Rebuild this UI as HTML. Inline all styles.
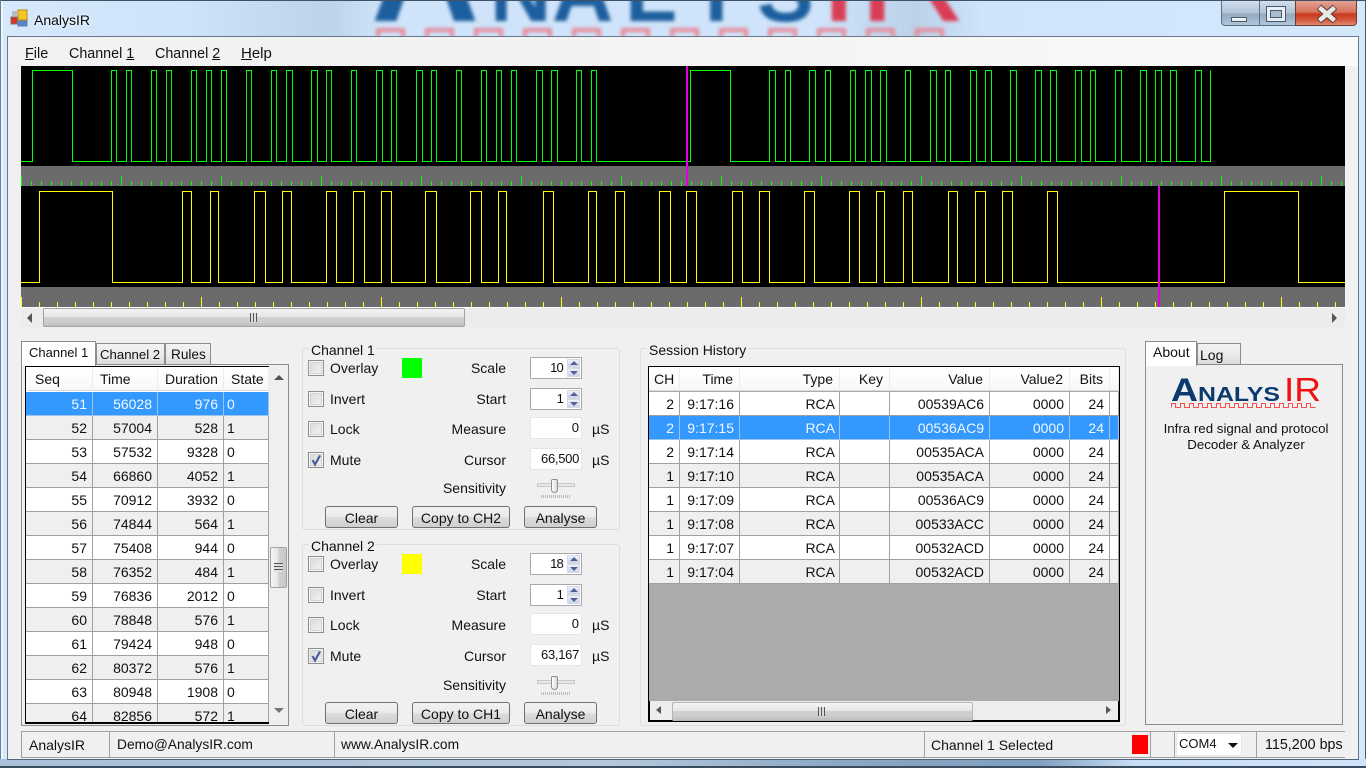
<!DOCTYPE html>
<html><head><meta charset="utf-8"><title>AnalysIR</title>
<style>
html,body{margin:0;padding:0;width:1366px;height:768px;overflow:hidden;background:#cfe4fa}
body{font:14px/16px "Liberation Sans",sans-serif;color:#111;position:relative}
div,span.a,svg.a{position:absolute}
svg{display:block}
.t{position:absolute;white-space:nowrap;line-height:16px;height:16px}
.r{position:absolute;white-space:nowrap;line-height:16px;height:16px;text-align:right}
.cb{position:absolute;width:14px;height:14px;left:308px;border:1px solid #8e8f8f;background:linear-gradient(135deg,#d8d8d8,#f4f4f4);box-shadow:inset 0 0 0 1px #f4f4f4,inset 0 0 0 2px #d4d4d4}
.btn{position:absolute;height:20px;border:1px solid #707070;border-radius:3px;overflow:hidden;text-align:center;line-height:22px;background:linear-gradient(#f2f2f2,#ebebeb 48%,#dddddd 52%,#cfcfcf);box-sizing:content-box}
.inp{position:absolute;left:530px;width:50px;height:20px;background:#fff;border:1px solid #e3e6e8;border-radius:1px;font-size:13px}
.spin{position:absolute;left:530px;width:50px;height:20px;background:#fff;border:1px solid #a9a9a9;font-size:13px;letter-spacing:-.8px}
.up,.dn{position:absolute;left:36px;width:13px;height:9px;background:linear-gradient(#f3f5fa,#c8d0e6);border:0;box-shadow:inset 0 0 0 1px #d6dae6}
.up{top:1px}.dn{top:10px}
.up:after,.dn:after{content:"";position:absolute;left:3px;border-left:4px solid transparent;border-right:4px solid transparent}
.up:after{top:2px;border-bottom:4px solid #4f6197}
.dn:after{top:3px;border-top:4px solid #4f6197}
.gb{position:absolute;border:1px solid #d5dfe5;border-radius:3px;box-sizing:border-box}
.lg{position:absolute;background:#f0f0f0;padding:0 2px;white-space:nowrap;line-height:16px}
table{border-collapse:separate;border-spacing:0;table-layout:fixed;font-size:14px;position:absolute;left:0;top:25px}
td{height:23px;padding:0;border-right:1px solid #a0a0a0;border-bottom:1px solid #a0a0a0;text-align:right;line-height:22px;white-space:nowrap;overflow:hidden}
td span{padding-right:5px}
td.l{text-align:left;padding-left:3px}
tr.g td{background:#efefef}
tr.w td{background:#fff}
tr.s td{background:#3399ff;color:#f2f7ff;border-color:#9cc4ea}
.hd{position:absolute;top:0;height:24px;background:linear-gradient(#fff,#f7f8f9);border-right:1px solid #e9edf2;border-bottom:1px solid #d8dade;box-sizing:border-box;line-height:24px;white-space:nowrap}
.tri{position:absolute;width:0;height:0}
.tabi{position:absolute;border:1px solid #898c95;border-bottom:0;background:linear-gradient(#f2f2f2,#ebebeb 50%,#d9d9d9);box-sizing:border-box;white-space:nowrap}
.tabs{position:absolute;border:1px solid #898c95;border-bottom:0;background:#fff;box-sizing:border-box;line-height:21px;padding-left:7px;white-space:nowrap;z-index:3}
.sb{position:absolute;top:732px;height:25px;line-height:26px;white-space:nowrap}
.vl{position:absolute;top:732px;width:1px;height:25px;background:#a0a0a0}
.tk{position:absolute}
</style></head>
<body>
<!-- glass -->
<div style="left:0;top:0;width:1366px;height:768px;background:linear-gradient(90deg,#d6e8fb 0,#cde3fa 14%,#bcd3ea 24%,#cfe4fa 28%,#cfe4fa 60%,#bbd2e9 67%,#cfe4fb 72%,#d4e8fc 100%)"></div>
<svg class="a" style="left:0;top:0" width="1366" height="40">
<defs><filter id="bl" x="-5%" y="-20%" width="110%" height="140%"><feGaussianBlur stdDeviation="1.8"/></filter><clipPath id="cp"><rect width="1366" height="37"/></clipPath></defs>
<g clip-path="url(#cp)"><g filter="url(#bl)" font-family="Liberation Sans">
<text y="21" x="371" font-weight="bold" font-size="150" fill="#1f5f9e">A</text>
<text y="21" x="490 552 625 688 757" font-weight="bold" font-size="85" fill="#1f5f9e">NALYS</text>
<text y="21" x="818 858" font-size="150" fill="#d93c55">IR</text>
<path d="M378 38V30H403V38M427 38V30H452V38M476 38V30H501V38M525 38V30H550V38M574 38V30H599V38M623 38V30H648V38M672 38V30H697V38M721 38V30H746V38M770 38V30H795V38M819 38V30H844V38M868 38V30H893V38M917 38V30H942V38" fill="none" stroke="#e88a9a" stroke-width="4"/>
</g></g></svg>
<div style="left:0;top:0;width:1366px;height:1px;background:#3f5266"></div>
<!-- left/right edge -->
<div style="left:0;top:0;width:1px;height:768px;background:#6a7f94"></div>
<div style="left:1365px;top:0;width:1px;height:768px;background:#4a5b6c"></div>
<div style="left:1px;top:1px;width:2px;height:767px;background:#eef6fe"></div>
<!-- bottom glass -->
<div style="left:0;top:759px;width:1366px;height:9px;background:linear-gradient(90deg,#a9c0d8,#b4c8dc 45%,#8aa7c4 62%,#7f9fbe 76%,#c8def5 83%,#cfe3f9)"></div>
<div style="left:0;top:766px;width:1366px;height:2px;background:#3b4c5e"></div>
<!-- icon & title -->
<svg class="a" style="left:10px;top:9px" width="18" height="18">
<rect x="8" y="1" width="9" height="10" fill="#f6c52a" stroke="#b58a1a"/>
<rect x="1" y="8" width="6" height="7" fill="#d8322a" stroke="#7d6a60"/>
<rect x="8" y="12" width="9" height="5" fill="#4f86d8" stroke="#6a7f9c"/>
<rect x="2" y="2" width="5" height="5" fill="#b9bdc2"/>
</svg>
<div class="t" style="left:34px;top:12px;color:#0c0c0c;text-shadow:0 0 4px #fff">AnalysIR</div>
<!-- caption buttons -->
<div style="left:1221px;top:1px;width:38px;height:25px;box-sizing:border-box;border:1px solid #5e6f82;border-top:0;border-right:0;border-radius:0 0 0 4px;background:linear-gradient(#d1dfee,#aec2d6 50%,#93a9bf 55%,#b2c6da)"></div>
<div style="left:1259px;top:1px;width:36px;height:25px;box-sizing:border-box;border:1px solid #5e6f82;border-top:0;border-right:0;background:linear-gradient(#d1dfee,#aec2d6 50%,#93a9bf 55%,#b2c6da)"></div>
<div style="left:1295px;top:1px;width:62px;height:25px;box-sizing:border-box;border:1px solid #6d3a30;border-top:0;border-radius:0 0 4px 0;background:linear-gradient(#e4a194,#d8755f 45%,#c93a1e 55%,#d65a3e 80%,#e28a76)"></div>
<div style="left:1231px;top:17px;width:16px;height:5px;box-sizing:border-box;border:1px solid #4b5a6b;background:linear-gradient(#fff,#dfe5ec)"></div>
<div style="left:1266px;top:6px;width:20px;height:16px;box-sizing:border-box;border:1px solid #4b5a6b;background:#e8eef4"></div>
<div style="left:1270px;top:10px;width:12px;height:8px;box-sizing:border-box;border:1px solid #4b5a6b;background:#a9bccf"></div>
<svg class="a" style="left:1315px;top:4px" width="24" height="20"><path d="M4 3L20 17M20 3L4 17" stroke="#5a3a34" stroke-width="6.5" fill="none"/><path d="M4.5 3.5L19.5 16.5M19.5 3.5L4.5 16.5" stroke="#e8e8e8" stroke-width="4.5" fill="none"/></svg>
<!-- client -->
<div style="left:7px;top:36px;width:1352px;height:1px;background:#69788a"></div>
<div style="left:7px;top:36px;width:1px;height:724px;background:#69788a"></div>
<div style="left:1358px;top:36px;width:1px;height:724px;background:#69788a"></div>
<div style="left:7px;top:759px;width:1352px;height:1px;background:#52677d"></div>
<div style="left:8px;top:37px;width:1350px;height:722px;background:#f0f0f0"></div>
<div style="left:8px;top:37px;width:1350px;height:29px;background:linear-gradient(90deg,#f1f1f1,#f3f3f3 50%,#fafafa)"></div>
<div class="t" style="left:25px;top:46px;font-size:14.4px"><u>F</u>ile</div>
<div class="t" style="left:69px;top:46px;font-size:14.3px">Channel <u>1</u></div>
<div class="t" style="left:155px;top:46px;font-size:14.3px">Channel <u>2</u></div>
<div class="t" style="left:241px;top:46px;font-size:15px"><u>H</u>elp</div>
<!-- waveforms -->
<div style="left:21px;top:66px;width:1324px;height:241px;background:#000"></div>
<div style="left:21px;top:166px;width:1324px;height:20px;background:#6b6b6b"></div>
<div style="left:21px;top:287px;width:1324px;height:20px;background:#6b6b6b"></div>
<div class="tk" style="left:21px;top:181px;width:1324px;height:5px;background:repeating-linear-gradient(90deg,#0f0 0,#0f0 1px,transparent 1px,transparent 10px)"></div>
<div class="tk" style="left:21px;top:176px;width:1324px;height:5px;background:repeating-linear-gradient(90deg,#0f0 0,#0f0 1px,transparent 1px,transparent 100px)"></div>
<div class="tk" style="left:21px;top:302px;width:1324px;height:5px;background:repeating-linear-gradient(90deg,#ff0 0,#ff0 1px,transparent 1px,transparent 18px)"></div>
<div class="tk" style="left:21px;top:297px;width:1324px;height:5px;background:repeating-linear-gradient(90deg,#ff0 0,#ff0 1px,transparent 1px,transparent 180px)"></div>
<svg class="a" style="left:0;top:0" width="1366" height="330">
<path fill="none" stroke="#0f0" stroke-width="1" d="M21 161.5H32.5V70.5H72.5V161.5H111.5V70.5H116.5V161.5H126.5V70.5H131.5V161.5H151.5V70.5H156.5V161.5H166.5V70.5H171.5V161.5H191.5V70.5H196.5V161.5H206.5V70.5H211.5V161.5H221.5V70.5H226.5V161.5H246.5V70.5H251.5V161.5H271.5V70.5H276.5V161.5H286.5V70.5H292.5V161.5H311.5V70.5H317.5V161.5H326.5V70.5H331.5V161.5H351.5V70.5H356.5V161.5H376.5V70.5H382.5V161.5H391.5V70.5H396.5V161.5H416.5V70.5H422.5V161.5H431.5V70.5H436.5V161.5H456.5V70.5H461.5V161.5H481.5V70.5H486.5V161.5H496.5V70.5H501.5V161.5H511.5V70.5H516.5V161.5H536.5V70.5H542.5V161.5H551.5V70.5H557.5V161.5H576.5V70.5H581.5V161.5H591.5V70.5H596.5V161.5H690.5V70.5H730.5V161.5H769.5V70.5H775.5V161.5H785.5V70.5H790.5V161.5H809.5V70.5H815.5V161.5H825.5V70.5H830.5V161.5H850.5V70.5H855.5V161.5H865.5V70.5H871.5V161.5H880.5V70.5H886.5V161.5H905.5V70.5H910.5V161.5H930.5V70.5H936.5V161.5H945.5V70.5H950.5V161.5H970.5V70.5H976.5V161.5H985.5V70.5H991.5V161.5H1010.5V70.5H1016.5V161.5H1035.5V70.5H1041.5V161.5H1050.5V70.5H1056.5V161.5H1075.5V70.5H1081.5V161.5H1090.5V70.5H1095.5V161.5H1115.5V70.5H1121.5V161.5H1140.5V70.5H1146.5V161.5H1155.5V70.5H1161.5V161.5H1170.5V70.5H1176.5V161.5H1195.5V70.5H1201.5V161.5H1210.5V70.5"/>
<path fill="none" stroke="#ff0" stroke-width="1" d="M21 282.5H39.5V191.5H112.5V282.5H182.5V191.5H191.5V282.5H210.5V191.5H218.5V282.5H254.5V191.5H265.5V282.5H282.5V191.5H291.5V282.5H326.5V191.5H336.5V282.5H353.5V191.5H364.5V282.5H381.5V191.5H391.5V282.5H425.5V191.5H436.5V282.5H470.5V191.5H481.5V282.5H498.5V191.5H506.5V282.5H543.5V191.5H553.5V282.5H588.5V191.5H596.5V282.5H615.5V191.5H624.5V282.5H659.5V191.5H670.5V282.5H686.5V191.5H696.5V282.5H732.5V191.5H742.5V282.5H759.5V191.5H769.5V282.5H804.5V191.5H814.5V282.5H849.5V191.5H859.5V282.5H876.5V191.5H884.5V282.5H903.5V191.5H912.5V282.5H948.5V191.5H957.5V282.5H975.5V191.5H985.5V282.5H1002.5V191.5H1012.5V282.5H1047.5V191.5H1057.5V282.5H1224.5V191.5H1298.5V282.5H1345"/>
<rect x="686" y="66" width="2" height="120" fill="#e000e0"/>
<rect x="1158" y="186" width="2" height="121" fill="#e000e0"/>
</svg>
<!-- main hscroll -->
<div style="left:21px;top:307px;width:1324px;height:1px;background:#fff"></div>
<div style="left:21px;top:308px;width:1324px;height:19px;background:#ececec"></div>
<div class="tri" style="left:27px;top:313px;border-top:5px solid transparent;border-bottom:5px solid transparent;border-right:5px solid #555"></div>
<div class="tri" style="left:1332px;top:313px;border-top:5px solid transparent;border-bottom:5px solid transparent;border-left:5px solid #555"></div>
<div style="left:43px;top:308px;width:422px;height:19px;box-sizing:border-box;border:1px solid #a3a3a3;border-radius:2px;background:linear-gradient(#f4f4f4,#e6e6e6 45%,#cfcfcf 50%,#cdcdcd 80%,#bdbdbd)"></div>
<div style="left:250px;top:313px;width:7px;height:9px;background:repeating-linear-gradient(90deg,#555 0,#555 1px,#ddd 1px,#ddd 3px)"></div>

<!-- left tabs -->
<div class="tabs" style="left:21px;top:341px;width:75px;height:25px;font-size:13px">Channel 1</div>
<div class="tabi" style="left:96px;top:343px;width:69px;height:22px;line-height:21px;padding-left:3px;font-size:13.2px">Channel 2</div>
<div class="tabi" style="left:165px;top:343px;width:46px;height:22px;line-height:21px;padding-left:5px;font-size:13.6px">Rules</div>
<div style="left:21px;top:364px;width:268px;height:362px;box-sizing:border-box;border:1px solid #898c95"></div>
<!-- left list -->
<div style="left:25px;top:366px;width:245px;height:358px;box-sizing:border-box;border:1px solid #000;border-width:2px 0 2px 2px"></div>
<div style="left:26px;top:367px;width:243px;height:355px;overflow:hidden;background:#fff">
<div class="hd" style="left:1px;width:66px;padding-left:8px">Seq</div>
<div class="hd" style="left:67px;width:65px;padding-left:7px">Time</div>
<div class="hd" style="left:132px;width:66px;padding-left:7px">Duration</div>
<div class="hd" style="left:198px;width:45px;padding-left:7px">State</div>
<table style="width:243px">
<colgroup><col style="width:67px"><col style="width:65px"><col style="width:66px"><col style="width:45px"></colgroup>
<tr class="s"><td><span>51</span></td><td><span>56028</span></td><td><span>976</span></td><td class="l">0</td></tr>
<tr class="g"><td><span>52</span></td><td><span>57004</span></td><td><span>528</span></td><td class="l">1</td></tr>
<tr class="w"><td><span>53</span></td><td><span>57532</span></td><td><span>9328</span></td><td class="l">0</td></tr>
<tr class="g"><td><span>54</span></td><td><span>66860</span></td><td><span>4052</span></td><td class="l">1</td></tr>
<tr class="w"><td><span>55</span></td><td><span>70912</span></td><td><span>3932</span></td><td class="l">0</td></tr>
<tr class="g"><td><span>56</span></td><td><span>74844</span></td><td><span>564</span></td><td class="l">1</td></tr>
<tr class="w"><td><span>57</span></td><td><span>75408</span></td><td><span>944</span></td><td class="l">0</td></tr>
<tr class="g"><td><span>58</span></td><td><span>76352</span></td><td><span>484</span></td><td class="l">1</td></tr>
<tr class="w"><td><span>59</span></td><td><span>76836</span></td><td><span>2012</span></td><td class="l">0</td></tr>
<tr class="g"><td><span>60</span></td><td><span>78848</span></td><td><span>576</span></td><td class="l">1</td></tr>
<tr class="w"><td><span>61</span></td><td><span>79424</span></td><td><span>948</span></td><td class="l">0</td></tr>
<tr class="g"><td><span>62</span></td><td><span>80372</span></td><td><span>576</span></td><td class="l">1</td></tr>
<tr class="w"><td><span>63</span></td><td><span>80948</span></td><td><span>1908</span></td><td class="l">0</td></tr>
<tr class="g"><td><span>64</span></td><td><span>82856</span></td><td><span>572</span></td><td class="l">1</td></tr>
</table>
</div>
<!-- left vscroll -->
<div style="left:269px;top:366px;width:19px;height:359px;background:#efefef"></div>
<div class="tri" style="left:274px;top:375px;border-left:5px solid transparent;border-right:5px solid transparent;border-bottom:5px solid #555"></div>
<div class="tri" style="left:274px;top:708px;border-left:5px solid transparent;border-right:5px solid transparent;border-top:5px solid #777"></div>
<div style="left:270px;top:547px;width:17px;height:41px;box-sizing:border-box;border:1px solid #a3a3a3;border-radius:2px;background:linear-gradient(90deg,#f4f4f4,#e6e6e6 45%,#cfcfcf 55%,#c8c8c8)"></div>
<div style="left:274px;top:563px;width:9px;height:9px;background:repeating-linear-gradient(#555 0,#555 1px,#ddd 1px,#ddd 3px)"></div>

<!-- Channel 1 group -->
<div class="gb" style="left:302px;top:348px;width:318px;height:182px"></div>
<div class="lg" style="left:309px;top:342px">Channel 1</div>
<div class="cb" style="top:360px"></div><div class="t" style="left:330px;top:360px">Overlay</div>
<div style="left:402px;top:358px;width:20px;height:20px;background:#0f0"></div>
<div class="cb" style="top:391px"></div><div class="t" style="left:330px;top:391px">Invert</div>
<div class="cb" style="top:421px"></div><div class="t" style="left:330px;top:421px">Lock</div>
<div class="cb" style="top:452px"></div><div class="t" style="left:330px;top:452px">Mute</div>
<svg class="a" style="left:308px;top:452px" width="16" height="16"><path d="M4.5 8L7 12.5L12 3.5" fill="none" stroke="#4a5f97" stroke-width="2.2"/></svg>
<div class="r" style="left:420px;width:86px;top:360px">Scale</div>
<div class="r" style="left:420px;width:86px;top:391px">Start</div>
<div class="r" style="left:420px;width:86px;top:421px">Measure</div>
<div class="r" style="left:420px;width:86px;top:452px">Cursor</div>
<div class="r" style="left:420px;width:86px;top:480px">Sensitivity</div>
<div class="spin" style="top:357px"><span class="r" style="right:18px;top:2px">10</span><div class="up"></div><div class="dn"></div></div>
<div class="spin" style="top:388px"><span class="r" style="right:18px;top:2px">1</span><div class="up"></div><div class="dn"></div></div>
<div class="inp" style="top:417px"><span class="r" style="right:2px;top:2px">0</span></div>
<div class="inp" style="top:448px"><span class="r" style="right:2px;top:2px;letter-spacing:-.3px">66,500</span></div>
<div class="t" style="left:592px;top:421px">µS</div>
<div class="t" style="left:592px;top:452px">µS</div>
<div style="left:537px;top:483px;width:38px;height:4px;background:#e7e7e7;border:1px solid #c8c8c8;box-sizing:border-box"></div>
<div style="left:551px;top:479px;width:7px;height:14px;background:linear-gradient(90deg,#fff,#d8d8d8);border:1px solid #8f8f8f;border-radius:2px 2px 4px 4px;box-sizing:border-box"></div>
<div style="left:541px;top:495px;width:30px;height:3px;background:repeating-linear-gradient(90deg,#bbb 0,#bbb 1px,transparent 1px,transparent 2px)"></div>
<div class="btn" style="left:325px;top:506px;width:71px">Clear</div>
<div class="btn" style="left:412px;top:506px;width:96px">Copy to CH2</div>
<div class="btn" style="left:524px;top:506px;width:71px">Analyse</div>

<!-- Channel 2 group -->
<div class="gb" style="left:302px;top:544px;width:318px;height:182px"></div>
<div class="lg" style="left:309px;top:538px">Channel 2</div>
<div class="cb" style="top:556px"></div><div class="t" style="left:330px;top:556px">Overlay</div>
<div style="left:402px;top:554px;width:20px;height:20px;background:#ff0"></div>
<div class="cb" style="top:587px"></div><div class="t" style="left:330px;top:587px">Invert</div>
<div class="cb" style="top:617px"></div><div class="t" style="left:330px;top:617px">Lock</div>
<div class="cb" style="top:648px"></div><div class="t" style="left:330px;top:648px">Mute</div>
<svg class="a" style="left:308px;top:648px" width="16" height="16"><path d="M4.5 8L7 12.5L12 3.5" fill="none" stroke="#4a5f97" stroke-width="2.2"/></svg>
<div class="r" style="left:420px;width:86px;top:556px">Scale</div>
<div class="r" style="left:420px;width:86px;top:587px">Start</div>
<div class="r" style="left:420px;width:86px;top:617px">Measure</div>
<div class="r" style="left:420px;width:86px;top:648px">Cursor</div>
<div class="r" style="left:420px;width:86px;top:677px">Sensitivity</div>
<div class="spin" style="top:553px"><span class="r" style="right:18px;top:2px">18</span><div class="up"></div><div class="dn"></div></div>
<div class="spin" style="top:584px"><span class="r" style="right:18px;top:2px">1</span><div class="up"></div><div class="dn"></div></div>
<div class="inp" style="top:613px"><span class="r" style="right:2px;top:2px">0</span></div>
<div class="inp" style="top:644px"><span class="r" style="right:2px;top:2px;letter-spacing:-.3px">63,167</span></div>
<div class="t" style="left:592px;top:617px">µS</div>
<div class="t" style="left:592px;top:648px">µS</div>
<div style="left:537px;top:680px;width:38px;height:4px;background:#e7e7e7;border:1px solid #c8c8c8;box-sizing:border-box"></div>
<div style="left:551px;top:676px;width:7px;height:14px;background:linear-gradient(90deg,#fff,#d8d8d8);border:1px solid #8f8f8f;border-radius:2px 2px 4px 4px;box-sizing:border-box"></div>
<div style="left:541px;top:692px;width:30px;height:3px;background:repeating-linear-gradient(90deg,#bbb 0,#bbb 1px,transparent 1px,transparent 2px)"></div>
<div class="btn" style="left:325px;top:702px;width:71px">Clear</div>
<div class="btn" style="left:412px;top:702px;width:96px">Copy to CH1</div>
<div class="btn" style="left:524px;top:702px;width:71px">Analyse</div>

<!-- Session history -->
<div class="gb" style="left:640px;top:348px;width:486px;height:378px"></div>
<div class="lg" style="left:647px;top:342px">Session History</div>
<div style="left:648px;top:366px;width:472px;height:356px;box-sizing:border-box;border:1px solid #000;border-width:2px"></div>
<div style="left:649px;top:367px;width:470px;height:334px;overflow:hidden;background:#ababab">
<div class="hd" style="left:0;width:31px;padding-left:5px">CH</div>
<div class="hd" style="left:31px;width:60px;text-align:right;padding-right:6px">Time</div>
<div class="hd" style="left:91px;width:100px;text-align:right;padding-right:6px">Type</div>
<div class="hd" style="left:191px;width:50px;text-align:right;padding-right:6px">Key</div>
<div class="hd" style="left:241px;width:100px;text-align:right;padding-right:6px">Value</div>
<div class="hd" style="left:341px;width:80px;text-align:right;padding-right:6px">Value2</div>
<div class="hd" style="left:421px;width:40px;text-align:right;padding-right:6px">Bits</div>
<div class="hd" style="left:461px;width:9px"></div>
<table style="width:470px">
<colgroup><col style="width:31px"><col style="width:60px"><col style="width:100px"><col style="width:50px"><col style="width:100px"><col style="width:80px"><col style="width:40px"><col style="width:9px"></colgroup>
<tr class="w"><td><span>2</span></td><td><span>9:17:16</span></td><td><span style="padding-right:4px">RCA</span></td><td></td><td><span>00539AC6</span></td><td><span>0000</span></td><td><span>24</span></td><td></td></tr>
<tr class="s"><td><span>2</span></td><td><span>9:17:15</span></td><td><span style="padding-right:4px">RCA</span></td><td></td><td><span>00536AC9</span></td><td><span>0000</span></td><td><span>24</span></td><td></td></tr>
<tr class="w"><td><span>2</span></td><td><span>9:17:14</span></td><td><span style="padding-right:4px">RCA</span></td><td></td><td><span>00535ACA</span></td><td><span>0000</span></td><td><span>24</span></td><td></td></tr>
<tr class="g"><td><span>1</span></td><td><span>9:17:10</span></td><td><span style="padding-right:4px">RCA</span></td><td></td><td><span>00535ACA</span></td><td><span>0000</span></td><td><span>24</span></td><td></td></tr>
<tr class="w"><td><span>1</span></td><td><span>9:17:09</span></td><td><span style="padding-right:4px">RCA</span></td><td></td><td><span>00536AC9</span></td><td><span>0000</span></td><td><span>24</span></td><td></td></tr>
<tr class="g"><td><span>1</span></td><td><span>9:17:08</span></td><td><span style="padding-right:4px">RCA</span></td><td></td><td><span>00533ACC</span></td><td><span>0000</span></td><td><span>24</span></td><td></td></tr>
<tr class="w"><td><span>1</span></td><td><span>9:17:07</span></td><td><span style="padding-right:4px">RCA</span></td><td></td><td><span>00532ACD</span></td><td><span>0000</span></td><td><span>24</span></td><td></td></tr>
<tr class="g"><td><span>1</span></td><td><span>9:17:04</span></td><td><span style="padding-right:4px">RCA</span></td><td></td><td><span>00532ACD</span></td><td><span>0000</span></td><td><span>24</span></td><td></td></tr>
</table>
</div>
<div style="left:650px;top:701px;width:468px;height:19px;background:#ededed"></div>
<div class="tri" style="left:656px;top:706px;border-top:4px solid transparent;border-bottom:4px solid transparent;border-right:5px solid #555"></div>
<div class="tri" style="left:1106px;top:706px;border-top:4px solid transparent;border-bottom:4px solid transparent;border-left:5px solid #555"></div>
<div style="left:672px;top:702px;width:301px;height:19px;box-sizing:border-box;border:1px solid #b5b5b5;border-radius:2px;background:linear-gradient(#f4f4f4,#e6e6e6 45%,#cfcfcf 50%,#cdcdcd 80%,#bdbdbd)"></div>
<div style="left:818px;top:707px;width:7px;height:9px;background:repeating-linear-gradient(90deg,#555 0,#555 1px,#ddd 1px,#ddd 3px)"></div>

<!-- About -->
<div class="tabs" style="left:1145px;top:341px;width:52px;height:25px">About</div>
<div class="tabi" style="left:1197px;top:343px;width:44px;height:22px;line-height:22px;padding-left:2px">Log</div>
<div style="left:1145px;top:364px;width:198px;height:361px;box-sizing:border-box;border:1px solid #898c95"></div>
<svg class="a" style="left:1160px;top:370px" width="175" height="45">
<text y="31" x="11" font-family="Liberation Sans" font-weight="bold" font-size="32" fill="#0a3a6e" textLength="27" lengthAdjust="spacingAndGlyphs">A</text>
<text y="31" x="38" font-family="Liberation Sans" font-weight="bold" font-size="20" fill="#0a3a6e" textLength="82" lengthAdjust="spacingAndGlyphs">NALYS</text>
<text y="31" x="124" font-family="Liberation Sans" font-size="33" fill="#f01010" textLength="37" lengthAdjust="spacingAndGlyphs">IR</text>
<path d="M11.5 37.5v-4h4v4h5v-4h4v4h5v-4h4v4h5v-4h4v4h5v-4h4v4h5v-4h4v4h5v-4h4v4h5v-4h4v4h5v-4h4v4h5v-4h4v4h5v-4h4v4h5v-4h4v4h5v-4h4v4h5v-4h4v4h5v-4h4v4h5v-4h4v4h5" fill="none" stroke="#f45050" stroke-width="1"/>
</svg>
<div class="t" style="left:1146px;width:200px;text-align:center;top:421px;font-size:13.3px">Infra red signal and protocol</div>
<div class="t" style="left:1146px;width:200px;text-align:center;top:437px;font-size:13.3px">Decoder &amp; Analyzer</div>

<!-- Status bar -->
<div style="left:21px;top:731px;width:1324px;height:1px;background:#a0a0a0"></div>
<div style="left:21px;top:757px;width:1324px;height:1px;background:#a0a0a0"></div>
<div class="vl" style="left:21px"></div>
<div class="vl" style="left:109px"></div>
<div class="vl" style="left:334px"></div>
<div class="vl" style="left:924px"></div>
<div class="vl" style="left:1150px"></div>
<div class="vl" style="left:1174px"></div>
<div class="vl" style="left:1256px"></div>
<div class="sb" style="left:29px">AnalysIR</div>
<div class="sb" style="left:117px;font-size:13.8px">Demo@AnalysIR.com</div>
<div class="sb" style="left:341px;font-size:13.8px">www.AnalysIR.com</div>
<div class="sb" style="left:931px">Channel 1 Selected</div>
<div style="left:1132px;top:735px;width:16px;height:19px;background:#f00"></div>
<div style="left:1176px;top:733px;width:66px;height:23px;background:#fff;box-sizing:border-box;border:1px solid #e3e6e8"></div>
<div class="t" style="left:1179px;top:736px;font-size:13px">COM4</div>
<div class="tri" style="left:1228px;top:743px;border-left:5px solid transparent;border-right:5px solid transparent;border-top:5px solid #111"></div>
<div class="sb" style="left:1265px;font-size:14.3px">115,200 bps</div>
</body></html>
